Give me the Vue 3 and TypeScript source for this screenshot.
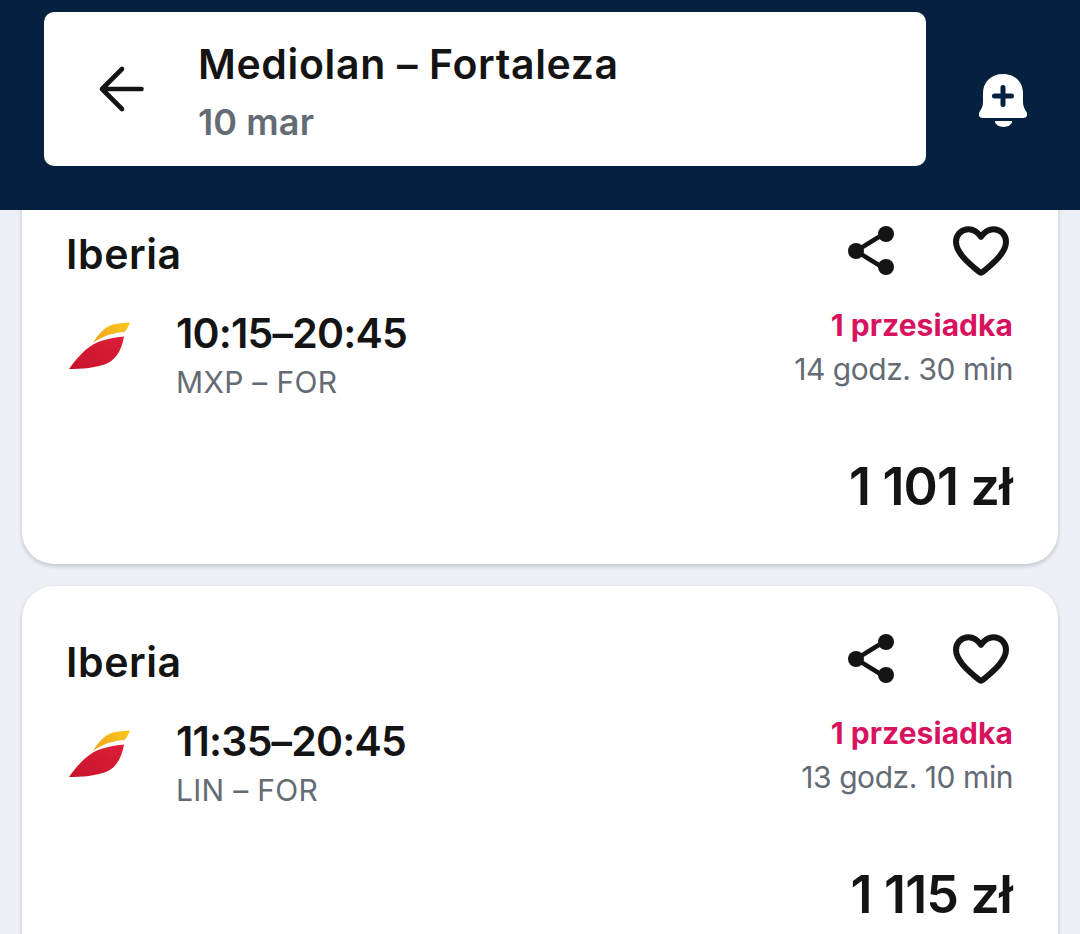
<template>
  <div class="page">
    <header class="top-bar">
      <div class="search-box">
        <button class="back-btn" aria-label="Wstecz">
          <svg viewBox="0 0 48 48" width="48" height="48" fill="none" stroke="#141414" stroke-width="4.6" stroke-linecap="round" stroke-linejoin="round">
            <path d="M44.500 24H5M25 4 5 24l20 20"/>
          </svg>
        </button>
        <div class="route">
          <div class="route-title">Mediolan – Fortaleza</div>
          <div class="route-date">10 mar</div>
        </div>
      </div>
      <button class="alert-btn" aria-label="Dodaj alert">
        <svg viewBox="0 0 48 54" width="48" height="54">
          <path fill="#fff" d="M24 0C12 0 4 8 4 19.500V28c0 4-1.300 6.500-3.500 10-1.500 2.600-.4 6 3 6h41c3.400 0 4.500-3.400 3-6-2.200-3.500-3.500-6-3.500-10v-8.500C44 8 36 0 24 0Z"/>
          <path fill="#fff" d="M16.500 47h15.500c.8 0 1.200.5 1 1.100C32 51.300 28.500 53 24.500 53S17 51.300 16 48.100c-.2-.6-.2-1.100.5-1.100Z"/>
          <path fill="none" stroke="#052140" stroke-width="5" stroke-linecap="round" d="M24 13.500v17M15.500 22h17"/>
        </svg>
      </button>
    </header>

    <main class="results">
      <article v-for="flight in flights" :key="flight.price" class="card">
        <div class="card-head">
          <div class="airline">{{ flight.airline }}</div>
          <div class="actions">
            <svg viewBox="0 0 48 50" width="48" height="50">
              <path fill="none" stroke="#141414" stroke-width="4.500" d="M35 9 9 25l26 16"/>
              <circle cx="9" cy="25" r="8" fill="#141414"/>
              <circle cx="39" cy="8" r="8" fill="#141414"/>
              <circle cx="39" cy="41" r="8" fill="#141414"/>
            </svg>
            <svg viewBox="0 0 56 50" width="56" height="50">
              <path fill="none" stroke="#141414" stroke-width="6" stroke-linejoin="round" d="M28 10.800C24.500 5.800 20.500 3.200 15.500 3.200 8.400 3.200 3 8.700 3 15.800c0 9.900 10.200 19.500 23 29.900 1.200 1 2.800 1 4 0 12.800-10.400 23-20 23-29.900C53 8.700 47.600 3.200 40.500 3.200 35.500 3.200 31.500 5.800 28 10.800Z"/>
            </svg>
          </div>
        </div>
        <div class="card-body">
          <svg class="logo" viewBox="0 0 62 48" width="62" height="48">
            <defs>
              <linearGradient id="ib-yellow" x1="0" y1="1" x2="1" y2="0">
                <stop offset="0" stop-color="#ee9f1c"/>
                <stop offset="1" stop-color="#fcc81e"/>
              </linearGradient>
              <linearGradient id="ib-red" x1="0" y1="1" x2="1" y2="0">
                <stop offset="0" stop-color="#c8132c"/>
                <stop offset="1" stop-color="#dc1f38"/>
              </linearGradient>
            </defs>
            <path fill="url(#ib-yellow)" d="M25 21C30 13 36 5 45 2.500 50 1 56 1 62 .5c-1.500 3.500-3 7-5.500 9.500-11 .6-22 4-31.500 11Z"/>
            <path fill="url(#ib-red)" d="M1 47C8 37 18 25 30 20c8-3 17-4.500 26-5.500C54.500 24 50 36 40 41 29 46 13 47 1 47Z"/>
          </svg>
          <div class="times">
            <div class="hours">{{ flight.hours }}</div>
            <div class="airports">{{ flight.airports }}</div>
          </div>
          <div class="stops">
            <div class="stop-count">{{ flight.stops }}</div>
            <div class="duration">{{ flight.duration }}</div>
          </div>
        </div>
        <div class="price">{{ flight.price }}</div>
      </article>
    </main>
  </div>
</template>

<script setup lang="ts">
interface Flight {
  airline: string;
  hours: string;
  airports: string;
  stops: string;
  duration: string;
  price: string;
}

const flights: Flight[] = [
  {
    airline: 'Iberia',
    hours: '10:15–20:45',
    airports: 'MXP – FOR',
    stops: '1 przesiadka',
    duration: '14 godz. 30 min',
    price: '1 101 zł'
  },
  {
    airline: 'Iberia',
    hours: '11:35–20:45',
    airports: 'LIN – FOR',
    stops: '1 przesiadka',
    duration: '13 godz. 10 min',
    price: '1 115 zł'
  }
];
</script>

<style>
html,
body {
  margin: 0;
  height: 934px;
  overflow: hidden;
  background: #edf0f6;
}
</style>

<style scoped>
.page {
  height: 934px;
  overflow: hidden;
  font-family: Inter, "Noto Sans", sans-serif;
  color: #141414;
}

.top-bar {
  position: relative;
  z-index: 1;
  box-sizing: border-box;
  height: 210px;
  padding: 12px 0 0 44px;
  display: flex;
  align-items: flex-start;
  background: #05213f;
}

.search-box {
  box-sizing: border-box;
  width: 882px;
  height: 154px;
  display: flex;
  align-items: center;
  background: #fff;
  border-radius: 10px;
}

button {
  border: 0;
  padding: 0;
  background: none;
  display: flex;
}

.back-btn {
  margin-left: 53px;
}

.route {
  margin-left: 54px;
  margin-top: 4px;
}

.route-title {
  font-size: 41px;
  line-height: 48px;
  font-weight: 600;
  letter-spacing: 0.65px;
  margin-left: -1px;
}

.route-date {
  margin-top: 13px;
  margin-left: -1px;
  font-size: 36px;
  line-height: 42px;
  font-weight: 600;
  letter-spacing: 0.1px;
  color: #636b74;
}

.alert-btn {
  margin: 62px 0 0 53px;
}

.results {
  margin-top: -32px;
  padding: 0 22px;
  display: flex;
  flex-direction: column;
  gap: 22px;
}

.card {
  box-sizing: border-box;
  height: 386px;
  padding: 46px 45px 0;
  flex-shrink: 0;
  background: #fff;
  border-radius: 32px;
  box-shadow: 0 2px 4px rgba(20, 30, 50, 0.22);
}

.card-head {
  display: flex;
  justify-content: space-between;
  align-items: center;
  height: 60px;
}

.airline {
  margin-left: -1px;
  font-size: 41px;
  line-height: 48px;
  font-weight: 600;
  letter-spacing: 0.6px;
}

.actions {
  display: flex;
  align-items: center;
  gap: 58px;
  margin-right: 4px;
  margin-top: -6px;
}

.card-body {
  display: flex;
  align-items: flex-start;
  margin-top: 24px;
}

.logo {
  margin: 14px 0 0 1px;
  flex-shrink: 0;
}

.times {
  margin-left: 46px;
  flex: 1;
}

.hours {
  font-size: 41px;
  line-height: 50px;
  font-weight: 600;
  letter-spacing: -0.8px;
}

.airports {
  margin-top: 5px;
  font-size: 30px;
  line-height: 38px;
  color: #636b74;
  letter-spacing: 0.3px;
}

.stops {
  text-align: right;
}

.stop-count {
  font-size: 30px;
  line-height: 38px;
  font-weight: 700;
  color: #d8125f;
  letter-spacing: 0.05px;
  margin-top: -2px;
}

.duration {
  margin-top: 6px;
  font-size: 30px;
  line-height: 38px;
  color: #636b74;
  letter-spacing: -0.45px;
}

.price {
  margin-top: 56px;
  margin-right: 1px;
  text-align: right;
  font-size: 52px;
  line-height: 60px;
  font-weight: 600;
  letter-spacing: -0.8px;
}
</style>
